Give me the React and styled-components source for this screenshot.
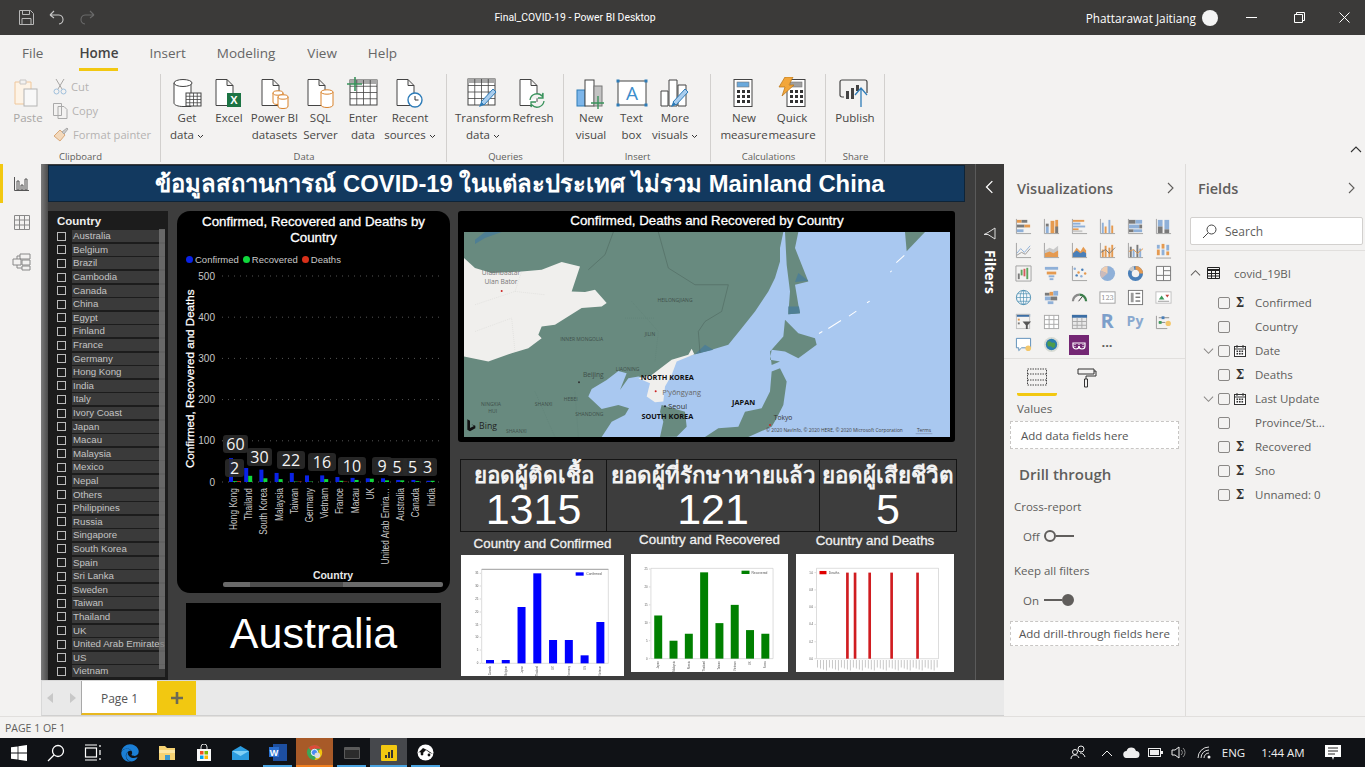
import styled, { createGlobalStyle } from "styled-components";
import { FaEdge } from "react-icons/fa";

const UI = `"Open Sans", "Noto Sans", sans-serif`;
const ARIAL = `"Liberation Sans", "Noto Sans", sans-serif`;

const Global = createGlobalStyle`
  html, body { margin: 0; padding: 0; background: #f3f2f1; }
  * { box-sizing: border-box; }
`;

const Win = styled.div`
  width: 1365px; height: 767px; overflow: hidden;
  display: flex; flex-direction: column;
  font-family: ${UI}; color: #444;
`;

/* title bar */
const TitleBar = styled.div`
  height: 35px; flex: none; background: #3b3a39; color: #fff;
  display: flex; align-items: center; font-size: 11.8px;
`;
const QuickBtn = styled.div`
  width: 31px; display: flex; justify-content: center; align-items: center;
  &:first-child { margin-left: 11px; width: 30px; }
`;
const AppTitle = styled.div`
  position: absolute; left: 0; width: 1150px; text-align: center; color: #fff;
  font-family: Roboto, sans-serif; font-size: 10.4px;
`;
const UserArea = styled.div`
  margin-left: auto; display: flex; align-items: center;
`;
const Avatar = styled.div`
  width: 16px; height: 16px; border-radius: 50%; background: #f4f4f4; margin: 0 9px 0 6px;
`;
const WinBtn = styled.div`
  width: 48px; display: flex; justify-content: center; align-items: center;
  &:last-child { width: 42px; }
`;

/* ribbon */
const TabRow = styled.div`
  height: 38px; flex: none; background: #f3f2f1; display: flex; padding-left: 22px; font-size: 13.5px; color: #605e5c;
`;
const RibbonTab = styled.div`
  margin-left: ${(p) => p.$gap}px; height: 36px; padding-top: 9px; color: ${(p) => (p.$on ? "#444" : "#666")};
  font-weight: ${(p) => (p.$on ? 600 : 400)};
  border-bottom: ${(p) => (p.$on ? "3px solid #f2c811" : "none")};
`;
const Ribbon = styled.div`
  height: 91px; flex: none; background: #f3f2f1; display: flex; position: relative;
`;
const Group = styled.div`
  width: ${(p) => p.$w}px; padding-left: ${(p) => p.$pad}px; display: flex; flex-direction: column;
  margin-top: 1px; position: relative;
  &::after { content: ""; position: absolute; right: 0; top: 0; bottom: 2px; width: 1px; background: #d2d0ce; }
`;
const GroupItems = styled.div`
  flex: 1; display: flex;
`;
const GroupName = styled.div`
  height: 15px; margin-left: ${(p) => -p.$pad}px; text-align: center; font-size: 9.5px; color: #605e5c; line-height: 15px;
`;
const RBtn = styled.div`
  width: ${(p) => p.$w}px; display: flex; flex-direction: column; align-items: center;
  font-size: 11.5px; line-height: 16.5px; color: ${(p) => (p.$off ? "#a8a6a4" : "#484644")};
  text-align: center; white-space: nowrap; padding-top: 2px;
`;
const RIcon = styled.div`
  height: 34px; display: flex; align-items: center; justify-content: center;
`;
const SmallCol = styled.div`
  display: flex; flex-direction: column; gap: 3px; padding-top: 2px; margin-left: 7px;
`;
const SmallBtn = styled.div`
  display: flex; align-items: center; gap: 4px; height: 21px; font-size: 11.2px; color: #b5b3b1; white-space: nowrap;
`;
const Collapse = styled.div`
  position: absolute; right: 3px; bottom: 3px;
`;

/* body */
const Body = styled.div`
  height: 552px; flex: none; display: flex; background: #f3f2f1;
`;
const LeftNav = styled.div`
  width: 41px; flex: none; display: flex; flex-direction: column;
`;
const NavItem = styled.div`
  height: 39px; display: flex; align-items: center; justify-content: center;
  border-left: 3px solid ${(p) => (p.$on ? "#f2c811" : "transparent")}; padding-right: 1px;
`;
const Center = styled.div`
  width: 963px; flex: none; display: flex; flex-direction: column;
`;
const CanvasRow = styled.div`
  height: 516px; flex: none; display: flex;
`;
const Canvas = styled.div`
  width: 934px; flex: none; overflow: hidden; padding-left: 7px; background: linear-gradient(90deg, #7b7b7b 0, #4b4b4b 7px, #3d3d3d 7px);
`;
const Banner = styled.div`
  width: 917px; height: 37px; margin-top: 1px; background: #12395f; border: 1px solid #0e2438; padding-left: 27px;
  color: #fff; font: bold 23.8px ${ARIAL}; display: flex; align-items: center; justify-content: center; white-space: nowrap;
`;
const Report = styled.div`
  display: flex; margin-top: 9px;
`;

const Slicer = styled.div`
  width: 120px; height: 490px; flex: none; background: #1c1c1c; padding: 3px 3px 0 9px; position: relative; font-family: ${ARIAL};
`;
const SlicerHead = styled.div`
  color: #eee; font-weight: bold; font-size: 11.5px; height: 15.5px; line-height: 15px;
`;
const SlicerRow = styled.div`
  height: 13.6px; display: flex; align-items: center; font-size: 9.7px; color: #c4c4c4;
`;
const SlicerBox = styled.div`
  width: 9px; height: 9px; border: 1.5px solid #bbb; flex: none; margin-right: 6px;
`;
const SlicerLabel = styled.div`
  flex: 1; height: 12px; line-height: 12px; background: #3a3a3a; padding-left: 1px; white-space: nowrap; overflow: visible;
`;
const SlicerThumb = styled.div`
  position: absolute; left: 111px; top: 18px; width: 6px; height: 440px; background: rgba(120,120,120,0.75);
`;

const MidCol = styled.div`
  width: 273px; flex: none; margin-left: 9px;
`;
const ChartCard = styled.div`
  height: 382px; background: #000; border-radius: 13px; font-family: ${ARIAL}; color: #fff; overflow: hidden;
`;
const ChartTitle = styled.div`
  font-size: 13.33px; -webkit-text-stroke: 0.3px #fff; line-height: 16px; text-align: center; padding: 3px 20px 0; height: 37px;
`;
const Legend = styled.div`
  display: flex; align-items: center; height: 16px; margin-top: 3px; padding-left: 9px; font-size: 9.5px; color: #c8c8c8;
`;
const LegendDot = styled.span`
  width: 7px; height: 7px; border-radius: 50%; background: ${(p) => p.$c}; margin: 0 2px 0 ${(p) => p.$gap || 0}px;
`;
const SvgFill = styled.svg`
  display: block;
`;
const SelectedCard = styled.div`
  width: 255px; height: 65px; margin: 10px 0 0 9px; background: #000; color: #fff;
  font: 43px/60px ${ARIAL}; text-align: center;
`;

const RightCol = styled.div`
  width: 499px; flex: none; margin-left: 8px; font-family: ${ARIAL};
`;
const MapCard = styled.div`
  width: 497px; height: 231px; background: #000; border-radius: 3px; padding: 0 5px 0 6px;
`;
const MapTitle = styled.div`
  height: 21px; line-height: 19px; color: #fff; font-size: 13.33px; -webkit-text-stroke: 0.3px #fff; text-align: center;
`;
const KpiRow = styled.div`
  width: 497px; height: 73px; margin: 17px 0 0 2px; display: flex; border: 1px solid #141414; color: #fff;
`;
const Kpi = styled.div`
  width: ${(p) => p.$w}px; flex: none; text-align: center; border-right: 1px solid #141414;
  &:last-child { border-right: none; }
`;
const KpiLabel = styled.div`
  font-weight: bold; font-size: 22.4px; line-height: 31px; height: 31px; white-space: nowrap; color: #f2f2f2;
`;
const KpiValue = styled.div`
  font-size: 43px; line-height: 36px;
`;
const Tiles = styled.div`
  display: flex;
`;
const Tile = styled.div`
  width: ${(p) => p.$w}px; margin-left: ${(p) => p.$ml}px; flex: none;
`;
const TileTitle = styled.div`
  height: ${(p) => p.$h}px; color: #f0f0f0; font-size: 13.33px; -webkit-text-stroke: 0.3px #f0f0f0; text-align: center;
  display: flex; align-items: center; justify-content: center; white-space: nowrap; padding-bottom: ${(p) => p.$pb}px;
`;
const TilePic = styled.svg`
  display: block; background: #fff; filter: blur(0.35px);
`;

/* filters strip */
const FilterStrip = styled.div`
  width: 29px; flex: none; background: #3b3a39; border-left: 1px solid #5a5a5a; color: #fff;
  display: flex; flex-direction: column; align-items: center; padding-top: 16px; padding-right: 1px;
`;
const FilterIcon = styled.svg`
  margin-top: 33px;
`;
const FilterWord = styled.div`
  writing-mode: vertical-rl; font-weight: 700; font-size: 14px; margin-top: 10px; line-height: 16px;
`;

/* page tabs */
const PageBar = styled.div`
  height: 36px; flex: none; background: #e9e9e9; border-top: 1px solid #d8d8d8; border-bottom: 1px solid #d0d0d0; display: flex;
  border-left: 1px solid #d8d8d8;
`;
const PageArrows = styled.div`
  width: 39px; display: flex; align-items: center; justify-content: space-between; padding: 0 5px 0 5px;
`;
const PageTab = styled.div`
  width: 76px; background: #fff; border-bottom: 2px solid #e8b820; border-left: 1px solid #a8a8a8; padding-top: 2px;
  font-size: 12px; color: #555; display: flex; align-items: center; justify-content: center;
`;
const AddPage = styled.div`
  width: 39px; background: #f2c811; display: flex; align-items: center; justify-content: center;
`;

/* panels */
const VizPanel = styled.div`
  width: 182px; flex: none; border-right: 1px solid #dedcda; padding-top: 13px;
`;
const PanelHead = styled.div`
  display: flex; justify-content: space-between; align-items: center; height: 22px;
  font-size: 14.5px; font-weight: 600; color: #605e5c; padding: 0 ${(p) => p.$r}px 0 ${(p) => p.$l}px;
`;
const VizGrid = styled.div`
  display: grid; grid-template-columns: repeat(6, 28px); grid-auto-rows: 23.6px;
  margin-top: 16px; padding-left: 5px;
  border-bottom: 1px solid #e1dfdd; height: 144px;
`;
const VizCell = styled.div`
  display: flex; align-items: center; justify-content: center;
`;
const VizGlyph = styled.span`
  font-family: ${UI}; font-weight: 700; font-size: ${(p) => p.$s}px; line-height: 22px; color: ${(p) => p.$c};
`;
const PanelTabs = styled.div`
  display: flex; height: 37px; padding-left: 13px;
`;
const PanelTab = styled.div`
  width: 40px; display: flex; justify-content: center; padding-top: 9px; margin-right: ${(p) => p.$mr || 0}px;
  border-bottom: ${(p) => (p.$on ? "3px solid #f2c811" : "none")}; border-radius: 2px;
`;
const PanelLabel = styled.div`
  font-size: 11.5px; color: #605e5c; margin-left: ${(p) => p.$l}px; margin-top: ${(p) => p.$t}px; line-height: 16px;
`;
const DropBox = styled.div`
  margin: ${(p) => p.$t}px 6px 0 6px; height: ${(p) => p.$h}px; background: #fff; border: 1px dashed #c8c6c4;
  font-size: 11.5px; color: #555; display: flex; align-items: center; padding-left: ${(p) => p.$l}px; white-space: nowrap;
`;
const DrillHead = styled.div`
  font-size: 15px; font-weight: 600; color: #605e5c; margin: 14px 0 0 15px; line-height: 22px;
`;
const ToggleRow = styled.div`
  display: flex; align-items: center; margin: ${(p) => p.$t}px 0 0 19px; font-size: 11.5px; color: #605e5c; height: 16px;
`;
const ToggleWord = styled.span`
  width: 21px;
`;
const Toggle = styled.div`
  display: flex; align-items: center; flex-direction: ${(p) => (p.$on ? "row-reverse" : "row")}; width: 30px;
  &::after { content: ""; flex: 1; height: 2px; background: #605e5c; }
`;
const Knob = styled.div`
  width: 12px; height: 12px; border-radius: 50%; border: 2px solid #605e5c; background: ${(p) => (p.$on ? "#605e5c" : "transparent")};
`;

const FieldsPanel = styled.div`
  width: 180px; flex: none; padding-top: 13px;
`;
const SearchBox = styled.div`
  margin: 18px 3px 0 4px; height: 28px; background: #fff; border: 1px solid #d2d0ce; border-radius: 2px;
  display: flex; align-items: center; padding-left: 11px; gap: 8px; font-size: 12px; color: #605e5c;
`;
const FieldsRule = styled.div`
  height: 1px; background: #e1dfdd; margin-top: 5px;
`;
const TableRow = styled.div`
  display: flex; align-items: center; height: 24px; margin-top: 10px; padding-left: 4px; font-size: 11.5px; color: #605e5c;
  gap: 6px;
`;
const TableName = styled.span`
  margin-left: 8px;
`;
const FieldList = styled.div`
  margin-top: 5.5px;
`;
const FieldRow = styled.div`
  display: flex; align-items: center; height: 24px; padding-left: 12px; font-size: 11.5px; color: #605e5c;
`;
const FieldChevron = styled.div`
  width: 20px; display: flex; justify-content: center;
`;
const FieldCheck = styled.div`
  width: 12px; height: 12px; border: 1px solid #8a8886; border-radius: 2px;
`;
const FieldType = styled.div`
  width: 20px; display: flex; justify-content: center; font: bold 12px "DejaVu Serif", serif; color: #333;
`;
const FieldName = styled.div`
  margin-left: 5px;
`;

/* bottom */
const StatusBar = styled.div`
  height: 22px; flex: none; background: #f3f2f1; border-top: 1px solid #e1dfdd; font-size: 10.5px; color: #605e5c;
  display: flex; align-items: center; padding-left: 5px;
`;
const TaskBar = styled.div`
  height: 29px; flex: none; background: #101216; display: flex; color: #fff;
`;
const TaskItem = styled.div`
  width: ${(p) => (p.$state === "running" ? 29 : 37)}px;
  margin: 0 ${(p) => (p.$state === "running" ? 4 : 0)}px;
  display: flex; align-items: center; justify-content: center;
  background: ${(p) => p.$bg || "transparent"};
  box-shadow: ${(p) => (p.$line ? `inset 0 -2px 0 ${p.$line}` : "none")};
`;
const Tray = styled.div`
  margin-left: auto; display: flex; padding-right: 17px; font-size: 11.5px; color: #eee;
`;
const TraySlot = styled.div`
  width: ${(p) => p.$w}px; display: flex; align-items: center; justify-content: center;
`;

/* ---- icon drawings ---- */
const Doc = () => <path d="M3 2.5h11l6 6v20H3z M14 2.5v6h6" fill="#fff" stroke="#444" />;
const Calc = ({ x = 6, top = "#6aa9dc" }) => (
  <g>
    <rect x={x} y="2.5" width="18" height="27" fill="#fff" stroke="#444" />
    <rect x={x + 3} y="5" width="12" height="5" fill={top} stroke="#777" strokeWidth=".6" />
    {[13, 18, 23].map((y) => [3, 8, 13].map((dx) => <rect key={y + "" + dx} x={x + dx} y={y} width="3" height="3" fill="#333" />))}
  </g>
);
const Cyl = ({ x, y, w, h, c = "#d9822b" }) => (
  <g fill="#fff" stroke={c}>
    <path d={`M${x} ${y + 2}v${h}a${w / 2} 2.5 0 0 0 ${w} 0v-${h}`} />
    <ellipse cx={x + w / 2} cy={y + 2} rx={w / 2} ry="2.2" />
  </g>
);
const Grid = ({ x, y, w, h, head, s = "#555" }) => (
  <g fill="none" stroke={s}>
    <rect x={x} y={y} width={w} height={h} fill="#fff" />
    {head && <rect x={x} y={y} width={w} height="4" fill="#a8a8a8" stroke="none" />}
    {[1, 2, 3].map((i) => <path key={i} d={`M${x + (w * i) / 4} ${y}v${h}`} strokeWidth=".8" />)}
    {[1, 2, 3].map((i) => <path key={i} d={`M${x} ${y + (h * i) / 4}h${w}`} strokeWidth=".8" />)}
  </g>
);
const Pencil = ({ tx = 0, ty = 0 }) => (
  <g transform={`translate(${tx} ${ty})`}>
    <path d="M9 23l3 3 12-13-3-3z" fill="#a9cdee" stroke="#2e7cb8" />
    <path d="M9 23l-2 5 5-2z" fill="#2e7cb8" />
  </g>
);
const RSvg = ({ children, w = 32, h = 32 }) => (
  <svg width={w} height={h} viewBox={`0 0 ${w} ${h}`}>{children}</svg>
);

const I = {
  paste: (
    <RSvg>
      <path d="M3 5h16v22H3z" fill="#fdf3e6" stroke="#f0c79a" />
      <path d="M8 3h6v4H8z" fill="#f3f2f1" stroke="#c8c6c4" />
      <rect x="12" y="12" width="13" height="17" fill="#f8f8f8" stroke="#b4b4b4" />
    </RSvg>
  ),
  get: (
    <RSvg>
      <g transform="translate(3 0)">
        <path d="M0 6v20c0 2 4 3.5 9 3.5h8V6z" fill="#fff" stroke="#444" />
        <ellipse cx="9" cy="6" rx="9" ry="3.5" fill="#fff" stroke="#444" />
        <Grid x={12} y={16} w={15} h={13} s="#444" />
      </g>
    </RSvg>
  ),
  excel: (
    <RSvg>
      <Doc />
      <rect x="14" y="16" width="14" height="14" fill="#1c7444" />
      <text x="21" y="27" fontSize="11" fontWeight="700" fill="#fff" textAnchor="middle" fontFamily="Liberation Sans">X</text>
    </RSvg>
  ),
  pbi: (
    <RSvg>
      <Doc />
      <Cyl x={14} y={14} w={10} h={9} />
      <Cyl x={19} y={18} w={10} h={9} />
    </RSvg>
  ),
  sql: (
    <RSvg>
      <Doc />
      <Cyl x={16} y={13} w={12} h={13} />
    </RSvg>
  ),
  enter: (
    <RSvg>
      <Grid x={3} y={3} w={27} h={25} head s="#444" />
      <path d="M8 0v14M0 7h15" stroke="#38925b" strokeWidth="1.6" />
    </RSvg>
  ),
  recent: (
    <RSvg>
      <Doc />
      <circle cx="21" cy="23" r="7" fill="#fff" stroke="#2e7cb8" strokeWidth="1.4" />
      <path d="M21 19v4h3.5" fill="none" stroke="#333" />
    </RSvg>
  ),
  transform: (
    <RSvg>
      <Grid x={1} y={2} w={27} h={26} head s="#444" />
      <Pencil tx={5} ty={2} />
    </RSvg>
  ),
  refresh: (
    <RSvg>
      <Doc />
      <path d="M13 23a7 7 0 0 1 12-4l1-3v5h-5M27 24a7 7 0 0 1-12 4l-1 2v-5h5" fill="#f3f2f1" stroke="#38925b" strokeWidth="1.3" />
    </RSvg>
  ),
  newVisual: (
    <RSvg>
      <rect x="2" y="13" width="8" height="16" fill="#7db6ea" stroke="#2e7cb8" />
      <rect x="10" y="3" width="9" height="26" fill="#fff" stroke="#444" />
      <rect x="19" y="9" width="8" height="20" fill="#c3c3c3" stroke="#777" />
      <path d="M23 19v13M16 26h13" stroke="#38925b" strokeWidth="1.4" />
    </RSvg>
  ),
  textBox: (
    <RSvg>
      <rect x="2" y="4" width="28" height="24" fill="#fff" stroke="#444" />
      {[[2, 4], [30, 4], [2, 28], [30, 28]].map(([x, y]) => <rect key={x + "" + y} x={x - 1.5} y={y - 1.5} width="3" height="3" fill="#2e7cb8" />)}
      <text x="16" y="23" fontSize="19" fill="#3b8dcc" textAnchor="middle" fontFamily="Open Sans">A</text>
    </RSvg>
  ),
  more: (
    <RSvg>
      <path d="M2 14h7v15H2zM10 3h8v26h-8zM19 8h8v21h-8z" fill="#fff" stroke="#444" />
      <Pencil tx={5} ty={2} />
    </RSvg>
  ),
  measure: (
    <RSvg>
      <Calc />
    </RSvg>
  ),
  quick: (
    <RSvg>
      <Calc x={11} top="#a0a0a0" />
      <path d="M9 0h8l-4 8h5L6 19l3-9H3z" fill="#f2a63a" stroke="#b87314" strokeWidth=".7" />
    </RSvg>
  ),
  publish: (
    <RSvg>
      <path d="M5 20H3a2 2 0 0 1-2-2V5a2 2 0 0 1 2-2h23a2 2 0 0 1 2 2v11" fill="none" stroke="#444" strokeWidth="1.2" />
      <path d="M7 14h3v8H7zM12 11h3v11h-3zM17 8h3v6h-3z" fill="#444" />
      <path d="M22 30V11M16 18l6-7 6 7" fill="none" stroke="#2e7cb8" strokeWidth="1.3" />
    </RSvg>
  ),
};

const B = "#8fb0d8", O = "#e59a50", K = "#7a7a7a", L = "#c9c9c9";
const Axis = () => <path d="M1.5 1v15.5H17" fill="none" stroke="#a0a0a0" />;
const rects = (list) => list.map(([x, y, w, h, c], i) => <rect key={i} x={x} y={y} width={w} height={h} fill={c} />);
const V = ({ children }) => <svg width="17" height="17" viewBox="0 0 18 18">{children}</svg>;
const vizIcons = [
  <V><Axis />{rects([[2, 2, 5, 3, O], [7, 2, 6, 3, K], [2, 7, 8, 3, K], [10, 7, 6, 3, O], [2, 12, 7, 3, B]])}</V>,
  <V><Axis />{rects([[3, 9, 3, 7, B], [3, 6, 3, 3, K], [8, 3, 4, 13, O], [13, 2, 3, 14, O], [13, 9, 3, 7, K]])}</V>,
  <V><Axis />{rects([[2, 2, 12, 2, O], [2, 5, 8, 2, B], [2, 8, 13, 2, B], [2, 11, 6, 2, O], [2, 13, 10, 2, L]])}</V>,
  <V><Axis />{rects([[3, 5, 2, 11, B], [6, 9, 2, 7, O], [10, 2, 2, 14, B], [13, 8, 2, 8, O]])}</V>,
  <V><Axis />{rects([[2, 2, 7, 4, K], [9, 2, 7, 4, B], [2, 7, 11, 4, B], [13, 7, 3, 4, K], [2, 12, 5, 3, K], [7, 12, 9, 3, B]])}</V>,
  <V><Axis />{rects([[3, 2, 5, 7, B], [3, 9, 5, 7, K], [10, 2, 5, 10, B], [10, 12, 5, 4, K]])}</V>,
  <V><Axis /><path d="M2 12l4-5 4 4 6-7" fill="none" stroke={B} /><path d="M2 14l5-3 4 2 5-6" fill="none" stroke="#999" /></V>,
  <V><Axis /><path d="M2 16V9l5-3 4 2 5-4v12z" fill={L} /><path d="M2 16v-4l5-2 4 2 5-3v7z" fill={O} /></V>,
  <V><Axis /><path d="M2 12l4-6 4 4 3-5 3 4v7H2z" fill={O} /><path d="M2 12l4-3 4 3 3-2 3 2v4H2z" fill="#4a7fb8" /></V>,
  <V><Axis />{rects([[3, 8, 2, 8, O], [6, 4, 2, 12, O], [10, 6, 2, 10, O], [13, 3, 2, 13, O]])}<path d="M2 11l5-3 4 4 6-6" fill="none" stroke="#777" /></V>,
  <V><Axis />{rects([[3, 5, 2, 11, K], [6, 8, 2, 8, B], [10, 3, 2, 13, K], [13, 7, 2, 9, B]])}<path d="M2 10l5-2 4 4 6-5" fill="none" stroke={O} /></V>,
  <V>{rects([[2, 3, 3, 4, B], [2, 8, 3, 6, O], [7, 2, 3, 5, O], [7, 8, 3, 6, B], [12, 3, 3, 6, B], [12, 10, 3, 4, O]])}<path d="M1 17h16" stroke="#a0a0a0" /></V>,
  <V><path d="M1 1h16v16H1z" fill="none" stroke="#a0a0a0" />{rects([[3, 9, 2, 6, K], [6, 5, 2, 6, "#5da55d"], [9, 4, 2, 8, "#d45d5d"], [12, 3, 2, 12, "#5da55d"]])}</V>,
  <V>{rects([[2, 2, 14, 3, B], [4, 7, 10, 3, O], [6, 11, 6, 2, B], [7, 14, 4, 2, B]])}</V>,
  <V><Axis />{[[4, 4, B], [8, 8, O], [12, 5, "#4a7fb8"], [6, 11, "#4a7fb8"], [11, 12, B], [15, 9, O]].map(([x, y, c], i) => <circle key={i} cx={x} cy={y} r="1.3" fill={c} />)}</V>,
  <V><circle cx="9" cy="9" r="8" fill={B} /><path d="M9 9V1a8 8 0 0 0-7 5z" fill="#f0cdb0" /><path d="M9 9L2 6a8 8 0 0 0 1 8z" fill="#cbb" /></V>,
  <V><circle cx="9" cy="9" r="6" fill="none" stroke="#4a7fb8" strokeWidth="4" /><path d="M9 3a6 6 0 0 1 6 6" fill="none" stroke={O} strokeWidth="4" /><path d="M3.5 6a6 6 0 0 1 4-3" fill="none" stroke={L} strokeWidth="4" /></V>,
  <V><path d="M1.5 1.5h15v15h-15zM1.5 11h15M9 1.5V11M9 6h7.5M9 11v5.5" fill="#fafafa" stroke="#777" /></V>,
  <V><circle cx="9" cy="9" r="7.5" fill="#f4f8fb" stroke="#4a8db0" /><path d="M1.5 9h15M9 1.5v15M3 5h12M3 13h12" stroke="#4a8db0" strokeWidth=".7" /><ellipse cx="9" cy="9" rx="3.5" ry="7.5" fill="none" stroke="#4a8db0" strokeWidth=".7" /></V>,
  <V>{rects([[2, 4, 5, 3, K], [7, 3, 4, 4, O], [11, 2, 5, 5, B], [2, 8, 6, 4, B], [8, 8, 7, 4, K], [5, 13, 6, 3, B]])}</V>,
  <V><path d="M2 13a7 7 0 0 1 7-7" fill="none" stroke="#8a8a8a" strokeWidth="2.4" /><path d="M9 6a7 7 0 0 1 7 7" fill="none" stroke="#3d7e4c" strokeWidth="2.4" /><path d="M8 13l4-5" stroke="#333" /></V>,
  <V><rect x="1" y="3" width="16" height="12" fill="#fff" stroke="#a0a0a0" /><text x="9" y="12" fontSize="7" fill="#8a8a8a" textAnchor="middle" fontFamily="DejaVu Serif">123</text></V>,
  <V><rect x="1.5" y="1.5" width="15" height="15" fill="#fff" stroke="#777" />{rects([[4, 4, 3, 10, "#9a9a9a"], [9, 4, 5, 1.5, K], [9, 8, 5, 1.5, K], [9, 12, 5, 1.5, K]])}</V>,
  <V><rect x="1" y="3" width="16" height="12" fill="#fff" stroke="#c0c0c0" /><path d="M4 11l3-4 3 4z" fill="#3d9a5c" /><path d="M11 6h4l-2 3z" fill="#c0463c" /><path d="M3 13h12" stroke="#999" /></V>,
  <V>{rects([[1, 1, 15, 3, "#3b6ea5"]])}<rect x="1.5" y="1.5" width="14" height="15" fill="none" stroke="#c0c0c0" />{rects([[3, 6, 2, 2, O], [3, 10, 2, 2, K]])}<path d="M8 9h9l-3.5 4v4h-2v-4z" fill="#555" /></V>,
  <V><rect x="1.5" y="2.5" width="15" height="14" fill="#fff" stroke="#a8a8a8" /><path d="M1.5 7h15M1.5 12h15M6.5 2.5v14M11.5 2.5v14" stroke="#a8a8a8" /></V>,
  <V><rect x="1.5" y="2.5" width="15" height="14" fill="#e8e8e8" stroke="#a8a8a8" />{rects([[1, 2, 16, 3, "#3b6ea5"]])}<path d="M1.5 9h15M1.5 13h15M6.5 5v11M11.5 5v11" stroke="#a8a8a8" /></V>,
  <VizGlyph $s={20} $c="#7d9fca">R</VizGlyph>,
  <VizGlyph $s={14} $c="#8aa9cf">Py</VizGlyph>,
  <V><path d="M1.5 3v13.5H13" fill="none" stroke="#999" /><path d="M4 5h11M4 10h7" stroke="#888" />{rects([[7, 3.5, 3, 3, "#4a7fb8"], [4, 8.5, 3, 3, "#3d9a5c"]])}<circle cx="14" cy="11" r="2.8" fill="#f3c76b" /></V>,
  <V><path d="M1.5 2.5h15v10H7l-3 3v-3H1.5z" fill="#fff" stroke="#5a8cb8" /><circle cx="14" cy="13" r="3" fill="#f3c76b" /></V>,
  <V><circle cx="9" cy="9" r="8" fill="#d8dbd4" /><circle cx="9" cy="9" r="6" fill="#2a7cb0" /><path d="M5 6c3-2 4 2 6 1s3 3 1 5-3-2-5-1-3-3-2-5z" fill="#4f9c4a" /></V>,
  <svg width="20" height="20" viewBox="0 0 20 20"><rect width="20" height="20" fill="#742774" /><path d="M4 8h12v3a3 3 0 0 1-6 0 3 3 0 0 1-6 0z" fill="none" stroke="#fff" strokeWidth="1.2" /><path d="M6 9v3M10 9v3M14 9v3" stroke="#fff" strokeDasharray="1 1" /></svg>,
  <VizGlyph $s={13} $c="#605e5c">···</VizGlyph>,
];

const Chev = ({ dir = "right", c = "#605e5c", s = 12 }) => {
  const d = { right: "M4 1l5 5-5 5", left: "M8 1L3 6l5 5", up: "M1 8l5-5 5 5", down: "M1 4l5 5 5-5" }[dir];
  return <svg width={s} height={s} viewBox="0 0 12 12"><path d={d} fill="none" stroke={c} strokeWidth="1.1" /></svg>;
};
const TinyDown = () => <svg width="7" height="5" viewBox="0 0 7 5"><path d="M1 1l2.5 2.5L6 1" fill="none" stroke="#333" /></svg>;
const Cal = () => (
  <svg width="12" height="12" viewBox="0 0 12 12">
    <rect x=".5" y="1.5" width="11" height="10" fill="#fff" stroke="#333" />
    <path d="M.5 4h11" stroke="#333" /><path d="M3 0v3M9 0v3" stroke="#333" />
    {[5.5, 8].map((y) => [2.5, 5, 7.5].map((x) => <rect key={y + "" + x} x={x} y={y} width="1.6" height="1.6" fill="#333" />))}
  </svg>
);

/* ---- data ---- */
const countries = ["Australia", "Belgium", "Brazil", "Cambodia", "Canada", "China", "Egypt", "Finland", "France", "Germany", "Hong Kong", "India", "Italy", "Ivory Coast", "Japan", "Macau", "Malaysia", "Mexico", "Nepal", "Others", "Philippines", "Russia", "Singapore", "South Korea", "Spain", "Sri Lanka", "Sweden", "Taiwan", "Thailand", "UK", "United Arab Emirates", "US", "Vietnam"];

const barData = [
  ["Hong Kong", 58, 2, 2], ["Thailand", 34, 15, 0], ["South Korea", 30, 9, 0], ["Malaysia", 22, 7, 0],
  ["Taiwan", 22, 1, 1], ["Germany", 16, 1, 0], ["Vietnam", 16, 7, 0], ["France", 12, 3, 1],
  ["Macau", 10, 5, 0], ["UK", 9, 8, 0], ["United Arab Emira…", 9, 4, 0], ["Australia", 5, 4, 0],
  ["Canada", 5, 2, 0], ["India", 3, 3, 0],
];
const dataLabels = [
  [223, 434, 25, 18, "60"], [225, 458, 19, 18, "2"], [247, 447, 25, 18, "30"], [277, 450, 28, 18, "22"],
  [308, 452, 28, 18, "16"], [338, 456, 28, 18, "10"], [372, 456, 20, 18, "9"], [387, 457, 20, 18, "5"],
  [403, 457, 19, 18, "5"], [418, 457, 19, 18, "3"],
];

const MainChart = () => {
  const y0 = 481, k = 0.412;
  return (
    <SvgFill width="273" height="327" viewBox="177 266 273 327" fontFamily="Liberation Sans">
      {[0, 100, 200, 300, 400, 500].map((v) => (
        <g key={v}>
          <path d={`M222 ${y0 - v * k}H443`} stroke="#555" strokeDasharray="1 5" />
          <text x="215" y={y0 - v * k + 3.5} fontSize="10" fill="#c8c8c8" textAnchor="end">{v}</text>
        </g>
      ))}
      <text transform="translate(194 467) rotate(-90)" fontSize="11.6" fill="#fff" stroke="#fff" strokeWidth=".25">Confirmed, Recovered and Deaths</text>
      {barData.map(([name, c, r, d], i) => {
        const x = 229 + i * 15.2;
        return (
          <g key={name}>
            <rect x={x} y={y0 - c * k} width="4" height={c * k} fill="#0a22e6" />
            <rect x={x + 4} y={y0 - r * k} width="4" height={r * k} fill="#10d83c" />
            <rect x={x + 8} y={y0 - d * k} width="4" height={d * k} fill="#d8301a" />
            <text transform={`translate(${x + 8} 487) rotate(-90) scale(.84 1)`} fontSize="10" fill="#c8c8c8" textAnchor="end">{name}</text>
          </g>
        );
      })}
      {dataLabels.map(([x, y, w, h, t], i) => (
        <g key={i}>
          <rect x={x} y={y} width={w} height={h} rx="3" fill="#2a2a2a" fillOpacity=".9" />
          <text x={x + w / 2} y={y + 14.5} fontSize="16" fill="#f4f4f4" textAnchor="middle" fontFamily="Open Sans">{t}</text>
        </g>
      ))}
      <text x="333" y="578" fontSize="10.5" fontWeight="700" fill="#e8e8e8" textAnchor="middle">Country</text>
      <rect x="223" y="581" width="220" height="5" rx="2" fill="#6a6a6a" />
      <rect x="250" y="581" width="93" height="5" fill="#4e4e4e" />
    </SvgFill>
  );
};

const LAND = "#688a7f", WATER = "#a9c8f0", PALE = "#f0efed";
const MapLabel = ({ x, y, s = 18, c = "#3f4f4a", b, children }) => (
  <text x={x} y={y} fontSize={s} fill={c} fontWeight={b ? 700 : 400} textAnchor="middle" fontFamily="Open Sans">{children}</text>
);
const MapView = () => (
  <SvgFill width="486" height="205" viewBox="27 82 1458 614" preserveAspectRatio="none">
    <rect x="27" y="82" width="1458" height="614" fill={WATER} />
    <path fill={LAND} d="M27 82H985L975 130 975 170 960 220 940 260 900 320 860 370 820 420 770 435 720 448 660 465 640 490 590 510 570 520 550 515 520 520 495 555 515 505 490 498 455 525 410 552 400 575 440 612 490 600 522 610 510 630 470 650 440 696H27z" />
    <path fill="#4f7f94" d="M60 118 90 100 140 82H90L60 105z" />
    <path fill={PALE} d="M27 160 60 190 110 205 200 200 260 195 320 172 375 185 350 260 390 262 420 255 455 295 440 305 380 310 300 360 260 365 250 390 260 400 220 430 170 445 100 470 27 455z" />
    <path fill={PALE} d="M710 432 718 448 665 470 650 510 630 545 625 590 600 592 575 575 585 535 550 520 590 510 650 465 700 450z" />
    <path fill={LAND} d="M620 600 690 620 695 665 665 695 615 696 625 650 615 620z" />
    <path fill={LAND} d="M990 82H1030L1020 130 1060 230 1020 240 1030 300 1035 325 1000 328 1005 260 995 180z" />
    <path fill="#4f7f94" d="M1030 205 1060 228 1020 232zM1000 305 1032 305 1035 325 1000 328zM720 448 750 420 775 435z" />
    <path fill={LAND} d="M1350 82H1410L1355 140z" />
    <path fill={LAND} d="M990 345 1030 385 1080 400 1085 420 1030 460 990 440 950 435 945 465 975 470 950 480 945 440 985 395z" />
    <path fill={LAND} d="M975 490 995 530 985 600 965 640 950 665 880 696H750L790 670 850 665 870 620 920 610 945 560 950 500z" />
    <path fill="none" stroke="#fff" strokeWidth="3" d="M1092 386l10-6M1120 371l38-24M1182 334l22-15M1324 174l24-22M1236 294l8-5M1306 202l4-4" />
    <path fill="none" stroke="#4a635b" strokeWidth="1.5" d="M475 82 450 150 400 195M610 82 640 190 720 240 820 240 800 320 750 350 730 380 735 445" />
    <path fill="none" stroke="#c9c7c4" strokeWidth="1" strokeDasharray="3 3" d="M60 300 180 260 270 270M180 260 200 200M60 380 170 340 180 440" />
    <path fill="none" stroke="#587a70" strokeWidth="1" strokeDasharray="3 3" d="M530 290 610 380 600 470M510 340 600 340M240 560 300 696M360 560 370 696" />
    <MapLabel x={138} y={211} s={20} c="#777">Ulaanbaatar</MapLabel>
    <MapLabel x={138} y={238} s={20} c="#777">Ulan Bator</MapLabel>
    <circle cx="140" cy="259" r="3" fill="#c22" />
    <MapLabel x={660} y={292} s={15}>HEILONGJIANG</MapLabel>
    <MapLabel x={380} y={408} s={15}>INNER MONGOLIA</MapLabel>
    <MapLabel x={585} y={395} s={15}>JILIN</MapLabel>
    <MapLabel x={415} y={516} s={20}>Beijing</MapLabel>
    <circle cx="372" cy="532" r="3" fill="#333" />
    <MapLabel x={518} y={498} s={15}>LIAONING</MapLabel>
    <MapLabel x={637} y={526} s={22} c="#111" b>NORTH KOREA</MapLabel>
    <circle cx="602" cy="559" r="3" fill="#c22" />
    <MapLabel x={680} y={569} s={22} c="#666">P'yŏngyang</MapLabel>
    <circle cx="630" cy="604" r="3" fill="#223" />
    <MapLabel x={668} y={611} s={22} c="#333">Seoul</MapLabel>
    <MapLabel x={637} y={642} s={22} c="#111" b>SOUTH KOREA</MapLabel>
    <MapLabel x={866} y={599} s={22} c="#111" b>JAPAN</MapLabel>
    <MapLabel x={984} y={646} s={20} c="#333">Tokyo</MapLabel>
    <circle cx="945" cy="660" r="3" fill="#c22" />
    <MapLabel x={108} y={603} s={15}>NINGXIA</MapLabel>
    <MapLabel x={113} y={625} s={15}>HUI</MapLabel>
    <MapLabel x={266} y={603} s={15}>SHANXI</MapLabel>
    <MapLabel x={347} y={588} s={15}>HEBEI</MapLabel>
    <MapLabel x={403} y={634} s={15}>SHANDONG</MapLabel>
    <MapLabel x={184} y={683} s={15}>SHAANXI</MapLabel>
    <path d="M37 643l8 4v22l12-6-8-5 12 4v8l-16 9-8-5z" fill="#111" />
    <MapLabel x={99} y={671} s={26} c="#222">Bing</MapLabel>
    <MapLabel x={1138} y={681} s={14.5} c="#444">© 2020 NavInfo, © 2020 HERE, © 2020 Microsoft Corporation  </MapLabel>
    <MapLabel x={1407} y={681} s={14.5} c="#444">Terms</MapLabel>
    <path d="M1382 686h50" stroke="#556" />
  </SvgFill>
);

const Ticks = ({ x, list, size = 8.5 }) =>
  list.map(([t, y]) => (
    <g key={t}>
      <path d={`M${x - 4} ${y}h4`} stroke="#666" strokeWidth=".8" />
      <text x={x - 8} y={y + 3} fontSize={size} fill="#555" textAnchor="end" fontFamily="Liberation Sans">{t}</text>
    </g>
  ));

const PlotFrame = ({ x0, y0, x1, y1 }) => <path d={`M${x0} ${y0}H${x1}V${y1}H${x0}z`} fill="none" stroke="#bbb" strokeWidth="1.5" />;

const ConfirmedPlot = () => {
  const tops = [390, 390, 231, 130, 330, 330, 376, 276];
  const names = ["Canada", "Belgium", "Japan", "Thailand", "UK", "Germany", "US", "Vietnam"];
  return (
    <TilePic width="163" height="121" viewBox="18 75 489 363">
      <PlotFrame x0={80} y0={118} x1={460} y1={400} />
      <path d="M80 118H460" stroke="#888" strokeWidth="2" />
      {tops.map((t, i) => (
        <g key={i}>
          <rect x={93 + i * 47.3} y={t} width="24" height={400 - t} fill="#0000ff" />
          <text transform={`translate(${108 + i * 47.3} 408) rotate(-90)`} fontSize="8" textAnchor="end" fill="#555" fontFamily="Liberation Sans">{names[i]}</text>
        </g>
      ))}
      <Ticks x={78} list={[["35", 130], ["30", 168], ["25", 207], ["20", 246], ["15", 284], ["10", 322], ["5", 360], ["0", 400]]} />
      <rect x="362" y="127" width="24" height="10" fill="#0000ff" />
      <text x="394" y="136" fontSize="10" fill="#555" fontFamily="Liberation Sans">Confirmed</text>
    </TilePic>
  );
};
const RecoveredPlot = () => {
  const tops = [257, 333, 312, 127, 280, 225, 301, 312];
  const names = ["Japan", "Malaysia", "Russia", "Thailand", "Taiwan", "Vietnam", "UK", "Korea"];
  return (
    <TilePic width="157" height="118" viewBox="527 72 473 355">
      <PlotFrame x0={587} y0={115} x1={955} y1={387} />
      {tops.map((t, i) => (
        <g key={i}>
          <rect x={597 + i * 46.1} y={t} width="24" height={387 - t} fill="#008000" />
          <text transform={`translate(${612 + i * 46.1} 395) rotate(-90)`} fontSize="8" textAnchor="end" fill="#555" fontFamily="Liberation Sans">{names[i]}</text>
        </g>
      ))}
      <Ticks x={585} list={[["25", 117], ["20", 171], ["15", 225], ["10", 279], ["5", 333], ["0", 387]]} />
      <rect x="860" y="122" width="24" height="10" fill="#008000" />
      <text x="890" y="131" fontSize="10" fill="#555" fontFamily="Liberation Sans">Recovered</text>
    </TilePic>
  );
};
const DeathsPlot = () => (
  <TilePic width="158" height="118" viewBox="1024 72 474 355">
    <PlotFrame x0={1085} y0={115} x1={1452} y1={387} />
    {[1178, 1201, 1245, 1311, 1389].map((x) => <rect key={x} x={x - 4} y="128" width="8" height="259" fill="#d01c20" />)}
    <Ticks x={1083} list={[["1.0", 128], ["0.8", 180], ["0.6", 232], ["0.4", 284], ["0.2", 336], ["0.0", 387]]} />
    <rect x="1094" y="123" width="21" height="10" fill="#e00000" />
    <text x="1122" y="132" fontSize="10" fill="#555" fontFamily="Liberation Sans">Deaths</text>
    {Array.from({ length: 41 }, (_, i) => (
      <path key={i} d={`M${1088 + i * 9} 392v${22 + (i % 4) * 3}`} stroke="#aaa" strokeWidth="3" strokeDasharray="2 1" />
    ))}
  </TilePic>
);

const rb = (icon, lines, w, drop) => ({ icon, lines, w, drop });
const groups = [
  { name: "Data", w: 286, pad: 5, items: [rb("get", ["Get", "data"], 42, true), rb("excel", ["Excel"], 42), rb("pbi", ["Power BI", "datasets"], 49), rb("sql", ["SQL", "Server"], 43), rb("enter", ["Enter", "data"], 42), rb("recent", ["Recent", "sources"], 52, true)] },
  { name: "Queries", w: 117, pad: 11, items: [rb("transform", ["Transform", "data"], 50, true), rb("refresh", ["Refresh"], 50)] },
  { name: "Insert", w: 147, pad: 7, items: [rb("newVisual", ["New", "visual"], 40), rb("textBox", ["Text", "box"], 41), rb("more", ["More", "visuals"], 46, true)] },
  { name: "Calculations", w: 115, pad: 9, items: [rb("measure", ["New", "measure"], 48), rb("quick", ["Quick", "measure"], 48)] },
  { name: "Share", w: 59, pad: 0, items: [rb("publish", ["Publish"], 58)] },
];

const fields = [
  { name: "Confirmed", sum: true }, { name: "Country" }, { name: "Date", cal: true, open: true },
  { name: "Deaths", sum: true }, { name: "Last Update", cal: true, open: true }, { name: "Province/St..." },
  { name: "Recovered", sum: true }, { name: "Sno", sum: true }, { name: "Unnamed: 0", sum: true },
];

const tasks = [
  { el: <svg width="16" height="16" viewBox="0 0 16 16" fill="#fff"><path d="M0 2.3l6.6-.9v6.2H0zM7.4 1.3L16 0v7.6H7.4zM0 8.4h6.6v6.2L0 13.7zM7.4 8.4H16V16l-8.6-1.2z" /></svg> },
  { el: <svg width="18" height="18" viewBox="0 0 18 18" fill="none" stroke="#fff" strokeWidth="1.3"><circle cx="11" cy="7" r="5.5" /><path d="M7 11l-6 6" /></svg> },
  { el: <svg width="18" height="17" viewBox="0 0 18 17" fill="none" stroke="#fff" strokeWidth="1.2"><path d="M1 1h12M1 16h12" /><rect x="1.5" y="4" width="11" height="9" /><path d="M16 1v2M16 6v5M16 14v2" /></svg> },
  { el: <FaEdge size={18} color="#1b7fd6" /> },
  { el: <svg width="18" height="16" viewBox="0 0 18 16"><path d="M1 1h6l2 2h8v12H1z" fill="#f5d273" /><path d="M1 5h16v3H1z" fill="#fbe6a5" /><path d="M7 10h5v5H7z" fill="#3d9ad1" /></svg> },
  { el: <svg width="16" height="17" viewBox="0 0 16 17"><path d="M1 5h14v12H1z" fill="#f8f8f8" /><path d="M5 5V3a3 3 0 0 1 6 0v2" fill="none" stroke="#ddd" />{rects([[4, 7, 3.5, 3.5, "#f25022"], [8.5, 7, 3.5, 3.5, "#7fba00"], [4, 11.5, 3.5, 3.5, "#00a4ef"], [8.5, 11.5, 3.5, 3.5, "#ffb900"]])}</svg> },
  { el: <svg width="17" height="14" viewBox="0 0 17 14"><path d="M0 5l8.5-5L17 5v9H0z" fill="#2b9ce0" /><path d="M0 5l8.5 5L17 5" fill="#7fd0f7" /></svg> },
  { el: <svg width="18" height="17" viewBox="0 0 18 17"><rect x="4" y="0" width="14" height="17" fill="#1d4fa0" /><rect x="0" y="3" width="10" height="10" fill="#2b6fd0" /><text x="5" y="11.5" fontSize="9" fontWeight="700" fill="#fff" textAnchor="middle" fontFamily="Liberation Sans">W</text></svg>, state: "running", line: "#4aa3e0" },
  { el: <svg width="17" height="17" viewBox="0 0 18 18"><circle cx="9" cy="9" r="8" fill="#3aa757" /><path d="M9 1a8 8 0 0 1 7 4H9a4 4 0 0 0-3.5 2L2.5 4A8 8 0 0 1 9 1z" fill="#dd4b39" /><path d="M16 5a8 8 0 0 1-7 12l3.5-6A4 4 0 0 0 13 7z" fill="#f4c20d" /><circle cx="9" cy="9" r="3.4" fill="#4a8bf5" stroke="#fff" /><circle cx="12" cy="12" r="3" fill="#ddd" /></svg>, state: "active", bg: "#a85a28", line: "#f08020" },
  { el: <svg width="16" height="12" viewBox="0 0 16 12"><rect width="16" height="12" rx="1" fill="#5a5a5a" /><rect x="1" y="3" width="14" height="8" fill="#2c2c2c" /></svg>, state: "running", line: "#4aa3e0" },
  { el: <svg width="16" height="16" viewBox="0 0 16 16"><rect width="16" height="16" rx="1" fill="#f2c811" /><path d="M4 10h2v3H4zM7 7h2v6H7zM10 5h2v8h-2z" fill="#333" /></svg>, state: "active", bg: "#46484c", line: "#4aa3e0" },
  { el: <svg width="17" height="17" viewBox="0 0 17 17"><circle cx="8.5" cy="8.5" r="8" fill="#fff" /><path d="M1 9l5-5 4 2 6 4-3-1-4-3-4 4-2-2z" fill="#111" /><circle cx="5" cy="10" r="1.4" fill="#111" /><circle cx="12" cy="11" r="1.4" fill="#111" /></svg>, state: "running", line: "#4aa3e0" },
];

const App = () => (
  <>
    <Global />
    <Win>
      <TitleBar>
        <QuickBtn>
          <svg width="15" height="15" viewBox="0 0 15 15" fill="none" stroke="#b8b8b8"><path d="M.5.5h11l3 3v11H.5zM3.5.5v4h7v-4M3 14.5v-6h9v6" /></svg>
        </QuickBtn>
        <QuickBtn>
          <svg width="15" height="15" viewBox="0 0 15 15" fill="none" stroke="#c8c8c8" strokeWidth="1.1"><path d="M1 5l4-4M1 5l4 3M1 5h8a4.5 4.5 0 0 1 1 9" /></svg>
        </QuickBtn>
        <QuickBtn>
          <svg width="15" height="15" viewBox="0 0 15 15" fill="none" stroke="#6a6a6a" strokeWidth="1.1"><path d="M14 5l-4-4M14 5l-4 3M14 5H6a4.5 4.5 0 0 0-1 9" /></svg>
        </QuickBtn>
        <AppTitle>Final_COVID-19 - Power BI Desktop</AppTitle>
        <UserArea>
          <span>Phattarawat Jaitiang</span>
          <Avatar />
          <WinBtn><svg width="11" height="11" viewBox="0 0 11 11"><path d="M0 5.5h11" stroke="#fff" /></svg></WinBtn>
          <WinBtn><svg width="11" height="11" viewBox="0 0 11 11" fill="none" stroke="#fff"><path d="M.5 2.5h8v8h-8zM2.5 2.5v-2h8v8h-2" /></svg></WinBtn>
          <WinBtn><svg width="11" height="11" viewBox="0 0 11 11" stroke="#fff"><path d="M.5.5l10 10M10.5.5l-10 10" /></svg></WinBtn>
        </UserArea>
      </TitleBar>

      <TabRow>
        <RibbonTab $gap={0}>File</RibbonTab>
        <RibbonTab $gap={36} $on>Home</RibbonTab>
        <RibbonTab $gap={31}>Insert</RibbonTab>
        <RibbonTab $gap={31}>Modeling</RibbonTab>
        <RibbonTab $gap={32}>View</RibbonTab>
        <RibbonTab $gap={31}>Help</RibbonTab>
      </TabRow>

      <Ribbon>
        <Group $w={161} $pad={10}>
          <GroupItems>
            <RBtn $w={36} $off><RIcon>{I.paste}</RIcon>Paste</RBtn>
            <SmallCol>
              <SmallBtn>
                <svg width="14" height="17" viewBox="0 0 14 17" fill="none" stroke="#a8a6a4"><path d="M3 1l6 10M11 1L5 11" /><circle cx="3.5" cy="13.5" r="2.5" stroke="#9fc0dc" /><circle cx="10.5" cy="13.5" r="2.5" stroke="#9fc0dc" /></svg>
                Cut
              </SmallBtn>
              <SmallBtn>
                <svg width="15" height="17" viewBox="0 0 15 17" fill="#f3f2f1" stroke="#aaa"><path d="M.5 1.5h8v12h-8zM5 4.5h6l3 3v9H5z" /></svg>
                Copy
              </SmallBtn>
              <SmallBtn>
                <svg width="16" height="15" viewBox="0 0 16 15"><path d="M1 9l6-6 5 5-5 6z" fill="#f3d9bc" stroke="#d9a878" /><path d="M9 5l5-4 1 1-4 5z" fill="#ccc" stroke="#aaa" /></svg>
                Format painter
              </SmallBtn>
            </SmallCol>
          </GroupItems>
          <GroupName $pad={10}>Clipboard</GroupName>
        </Group>
        {groups.map((g) => (
          <Group key={g.name} $w={g.w} $pad={g.pad}>
            <GroupItems>
              {g.items.map((it) => (
                <RBtn key={it.icon} $w={it.w}>
                  <RIcon>{I[it.icon]}</RIcon>
                  {it.lines.map((l, i) => (
                    <span key={l}>{l}{it.drop && i === it.lines.length - 1 && <> <TinyDown /></>}</span>
                  ))}
                </RBtn>
              ))}
            </GroupItems>
            <GroupName $pad={g.pad}>{g.name}</GroupName>
          </Group>
        ))}
        <Collapse><Chev dir="up" c="#333" /></Collapse>
      </Ribbon>

      <Body>
        <LeftNav>
          <NavItem $on>
            <svg width="15" height="14" viewBox="0 0 15 14" fill="none" stroke="#555"><path d="M.5 0v13.5H15M3 4h2v9H3zM7 8h2v5H7zM11 2h2v11h-2z" /></svg>
          </NavItem>
          <NavItem>
            <svg width="16" height="15" viewBox="0 0 16 15" fill="none" stroke="#888"><path d="M.5.5h15v14H.5zM.5 5h15M.5 10h15M5.5.5v14M10.5.5v14" /></svg>
          </NavItem>
          <NavItem>
            <svg width="19" height="18" viewBox="0 0 19 18" fill="none" stroke="#888"><path d="M8 1h10v5H8zM1 6h8v6H1zM10 7h8v5h-8zM10 13h8v4h-8zM5 6V3h3M5 12v3h5" /></svg>
          </NavItem>
        </LeftNav>

        <Center>
          <CanvasRow>
            <Canvas>
              <Banner>ข้อมูลสถานการณ์ COVID-19 ในแต่ละประเทศ ไม่รวม Mainland China</Banner>
              <Report>
                <Slicer>
                  <SlicerHead>Country</SlicerHead>
                  {countries.map((c) => (
                    <SlicerRow key={c}>
                      <SlicerBox />
                      <SlicerLabel>{c}</SlicerLabel>
                    </SlicerRow>
                  ))}
                  <SlicerThumb />
                </Slicer>
                <MidCol>
                  <ChartCard>
                    <ChartTitle>Confirmed, Recovered and Deaths by Country</ChartTitle>
                    <Legend>
                      <LegendDot $c="#0a22e6" />Confirmed
                      <LegendDot $c="#10d83c" $gap={4} />Recovered
                      <LegendDot $c="#d8301a" $gap={4} />Deaths
                    </Legend>
                    <MainChart />
                  </ChartCard>
                  <SelectedCard>Australia</SelectedCard>
                </MidCol>
                <RightCol>
                  <MapCard>
                    <MapTitle>Confirmed, Deaths and Recovered by Country</MapTitle>
                    <MapView />
                  </MapCard>
                  <KpiRow>
                    <Kpi $w={146}><KpiLabel>ยอดผู้ติดเชื้อ</KpiLabel><KpiValue>1315</KpiValue></Kpi>
                    <Kpi $w={213}><KpiLabel>ยอดผู้ที่รักษาหายแล้ว</KpiLabel><KpiValue>121</KpiValue></Kpi>
                    <Kpi $w={136}><KpiLabel>ยอดผู้เสียชีวิต</KpiLabel><KpiValue>5</KpiValue></Kpi>
                  </KpiRow>
                  <Tiles>
                    <Tile $w={163} $ml={3}>
                      <TileTitle $h={23} $pb={1}>Country and Confirmed</TileTitle>
                      <ConfirmedPlot />
                    </Tile>
                    <Tile $w={157} $ml={7}>
                      <TileTitle $h={22} $pb={8}>Country and Recovered</TileTitle>
                      <RecoveredPlot />
                    </Tile>
                    <Tile $w={158} $ml={8}>
                      <TileTitle $h={22} $pb={6}>Country and Deaths</TileTitle>
                      <DeathsPlot />
                    </Tile>
                  </Tiles>
                </RightCol>
              </Report>
            </Canvas>
            <FilterStrip>
              <Chev dir="left" c="#fff" s={14} />
              <FilterIcon width="13" height="13" viewBox="0 0 13 13" fill="none" stroke="#ddd"><path d="M12 1v11L5 7.5H1L5 5.5z" /></FilterIcon>
              <FilterWord>Filters</FilterWord>
            </FilterStrip>
          </CanvasRow>
          <PageBar>
            <PageArrows>
              <svg width="6" height="10" viewBox="0 0 6 10"><path d="M6 0v10L0 5z" fill="#c8c8c8" /></svg>
              <svg width="6" height="10" viewBox="0 0 6 10"><path d="M0 0v10l6-5z" fill="#c8c8c8" /></svg>
            </PageArrows>
            <PageTab>Page 1</PageTab>
            <AddPage>
              <svg width="12" height="12" viewBox="0 0 12 12"><path d="M6 0v12M0 6h12" stroke="#6d6a55" strokeWidth="2.6" /></svg>
            </AddPage>
          </PageBar>
        </Center>

        <VizPanel>
          <PanelHead $l={13} $r={9}>Visualizations<Chev /></PanelHead>
          <VizGrid>
            {vizIcons.map((ic, i) => <VizCell key={i}>{ic}</VizCell>)}
          </VizGrid>
          <PanelTabs>
            <PanelTab $on $mr={10}>
              <svg width="20" height="18" viewBox="0 0 20 18" fill="none" stroke="#444" strokeDasharray="1.5 1"><path d="M.5 1h19v16H.5zM.5 6h19M.5 12h19" /></svg>
            </PanelTab>
            <PanelTab>
              <svg width="20" height="20" viewBox="0 0 20 20" fill="none" stroke="#333"><path d="M1 1h16v5H1zM17 3h2v5H9v3M7.5 11h3v8h-3z" /></svg>
            </PanelTab>
          </PanelTabs>
          <PanelLabel $l={13} $t={5}>Values</PanelLabel>
          <DropBox $t={4} $h={28} $l={10}>Add data fields here</DropBox>
          <DrillHead>Drill through</DrillHead>
          <PanelLabel $l={10} $t={14}>Cross-report</PanelLabel>
          <ToggleRow $t={13}><ToggleWord>Off</ToggleWord><Toggle><Knob /></Toggle></ToggleRow>
          <PanelLabel $l={10} $t={19}>Keep all filters</PanelLabel>
          <ToggleRow $t={13}><ToggleWord>On</ToggleWord><Toggle $on><Knob $on /></Toggle></ToggleRow>
          <DropBox $t={13} $h={25} $l={8}>Add drill-through fields here</DropBox>
        </VizPanel>

        <FieldsPanel>
          <PanelHead $l={12} $r={9}>Fields<Chev /></PanelHead>
          <SearchBox>
            <svg width="15" height="15" viewBox="0 0 15 15" fill="none" stroke="#444"><circle cx="9.5" cy="5.5" r="4.5" /><path d="M6 9l-5 5" /></svg>
            Search
          </SearchBox>
          <FieldsRule />
          <TableRow>
            <Chev dir="up" s={11} />
            <svg width="13" height="12" viewBox="0 0 13 12" fill="none" stroke="#222"><path d="M.5.5h12v11H.5z" /><path d="M.5 3h12" strokeWidth="2" /><path d="M.5 6.5h12M.5 9h12M4.5 3v8M8.5 3v8" /></svg>
            <TableName>covid_19BI</TableName>
          </TableRow>
          <FieldList>
            {fields.map((f) => (
              <FieldRow key={f.name}>
                <FieldChevron>{f.open && <Chev dir="down" s={11} c="#8a8886" />}</FieldChevron>
                <FieldCheck />
                <FieldType>{f.sum ? "Σ" : f.cal ? <Cal /> : null}</FieldType>
                <FieldName>{f.name}</FieldName>
              </FieldRow>
            ))}
          </FieldList>
        </FieldsPanel>
      </Body>

      <StatusBar>PAGE 1 OF 1</StatusBar>

      <TaskBar>
        {tasks.map((t, i) => (
          <TaskItem key={i} $state={t.state} $bg={t.bg} $line={t.line}>{t.el}</TaskItem>
        ))}
        <Tray>
          <TraySlot $w={30}><svg width="16" height="15" viewBox="0 0 16 15" fill="none" stroke="#eee"><circle cx="11" cy="4" r="3" /><circle cx="5" cy="7" r="2.5" /><path d="M1 14c0-3 2-4 4-4s3 1 4 3M10 8c2 0 4 1 5 4" /></svg></TraySlot>
          <TraySlot $w={27}><svg width="12" height="8" viewBox="0 0 12 8" fill="none" stroke="#eee"><path d="M1 7l5-5 5 5" /></svg></TraySlot>
          <TraySlot $w={23}><svg width="17" height="11" viewBox="0 0 17 11" fill="#eee"><path d="M4 11a3.5 3.5 0 0 1-.5-7A5 5 0 0 1 13 4a3.5 3.5 0 0 1 0 7z" /></svg></TraySlot>
          <TraySlot $w={24}><svg width="15" height="9" viewBox="0 0 15 9"><rect x=".5" y=".5" width="12" height="8" fill="none" stroke="#eee" /><rect x="2" y="2" width="9" height="5" fill="#eee" /><rect x="13" y="3" width="2" height="3" fill="#eee" /></svg></TraySlot>
          <TraySlot $w={23}><svg width="16" height="13" viewBox="0 0 16 13" fill="none" stroke="#eee"><path d="M1 4h3l4-3v11L4 9H1z" /><path d="M10 4a3 3 0 0 1 0 5M12 2a6 6 0 0 1 0 9" stroke="#888" /></svg></TraySlot>
          <TraySlot $w={29}><svg width="15" height="13" viewBox="0 0 15 13" fill="none" stroke="#ddd"><path d="M1 12A11 11 0 0 1 12 1M4 12a8 8 0 0 1 8-8M7 12a5 5 0 0 1 5-5" /><circle cx="12" cy="11" r="1.5" fill="#eee" stroke="none" /></svg></TraySlot>
          <TraySlot $w={29}>ENG</TraySlot>
          <TraySlot $w={70}>1:44 AM</TraySlot>
          <TraySlot $w={30}><svg width="16" height="16" viewBox="0 0 16 16"><path d="M0 0h16v12H9l-1 3-1-3H0z" fill="#fff" /><path d="M3 3h10M3 6h10M3 9h7" stroke="#222" /></svg></TraySlot>
        </Tray>
      </TaskBar>
    </Win>
  </>
);

export default App;
